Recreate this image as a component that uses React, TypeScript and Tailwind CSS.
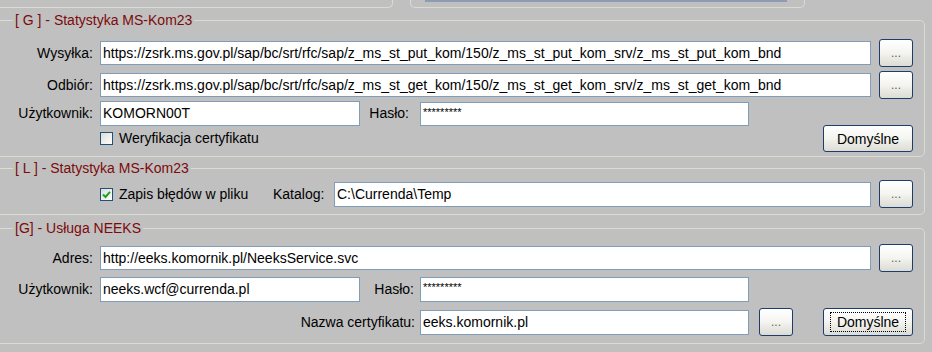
import React from 'react';

const frame = 'border border-[#dcdbd0] rounded-[5px]';

const TextBox: React.FC<{ value?: string; className?: string; password?: boolean }> = ({ value, className, password }) => (
  <div
    className={`flex bg-white border border-[#7f9db9] pl-[2px] whitespace-nowrap overflow-hidden ${password ? 'items-start pt-[1px] text-[11px]' : 'items-center text-[14px]'} ${className ?? ''}`}
  >
    {value}
  </div>
);

const Button: React.FC<{ label: string; className?: string; focused?: boolean; dim?: boolean }> = ({ label, className, focused, dim }) => (
  <div
    className={`flex items-center justify-center rounded-[3px] border border-[#1f3d6a] bg-gradient-to-b from-white via-[#f4f4f0] to-[#dcdcd4] ${className ?? ''}`}
  >
    <span
      className={`px-[3px] leading-[16px] ${dim ? 'text-[#606060] text-[12px]' : 'text-black text-[14px]'} ${focused ? 'outline outline-1 outline-dotted outline-black outline-offset-[1px] px-[5px]' : ''}`}
    >
      {label}
    </span>
  </div>
);

const CheckBox: React.FC<{ checked?: boolean }> = ({ checked }) => (
  <div className="w-[13px] h-[13px] border border-[#1c5180] bg-gradient-to-br from-[#dcdcd7] to-white flex items-center justify-center">
    {checked && (
      <svg width="9" height="9" viewBox="0 0 9 9">
        <path d="M1 4.5 L3.5 7 L8 1.8" fill="none" stroke="#21a121" strokeWidth="2" />
      </svg>
    )}
  </div>
);

const Legend: React.FC<{ title: string }> = ({ title }) => (
  <legend className="ml-[20px] px-[2px] text-[14px] leading-[16px] text-[#7d0a0a]">{title}</legend>
);

const Label: React.FC<{ text: string; className?: string }> = ({ text, className }) => (
  <div className={`text-right text-[14px] whitespace-nowrap ${className ?? ''}`}>{text}</div>
);

const PUT_URL = 'https://zsrk.ms.gov.pl/sap/bc/srt/rfc/sap/z_ms_st_put_kom/150/z_ms_st_put_kom_srv/z_ms_st_put_kom_bnd';
const GET_URL = 'https://zsrk.ms.gov.pl/sap/bc/srt/rfc/sap/z_ms_st_get_kom/150/z_ms_st_get_kom_srv/z_ms_st_get_kom_bnd';

export default function App() {
  return (
    <div
      className="w-[932px] h-[352px] overflow-hidden bg-[#c0c0c0] text-black"
      style={{ fontFamily: '"Liberation Sans", Arial, sans-serif' }}
    >
      {/* bottom edges of the panels above */}
      <div className="flex h-[8px]">
        <div className="-ml-[8px] w-[401px] h-[8px] border-b border-r border-[#dcdbd0] rounded-br-[5px]" />
        <div className="ml-[17px] w-[395px] h-[8px] border-b border-x border-[#dcdbd0] rounded-b-[5px]">
          <div className="ml-[14px] w-[362px] h-[2px] bg-[#8f9bb0]" />
        </div>
      </div>

      {/* [ G ] */}
      <fieldset className={`mt-[4px] -ml-[8px] w-[933px] ${frame} pb-[4px]`}>
        <Legend title="[ G ] - Statystyka MS-Kom23" />
        <div className="pl-[7px]">
          <div className="mt-[11px] flex items-center h-[28px]">
            <Label text="Wysyłka:" className="w-[93px]" />
            <TextBox className="ml-[7px] w-[771px] h-[24px]" value={PUT_URL} />
            <Button label="..." dim className="ml-[8px] w-[34px] h-[28px]" />
          </div>
          <div className="mt-[4px] flex items-center h-[28px]">
            <Label text="Odbiór:" className="w-[93px]" />
            <TextBox className="ml-[7px] w-[771px] h-[24px]" value={GET_URL} />
            <Button label="..." dim className="ml-[8px] w-[34px] h-[28px]" />
          </div>
          <div className="mt-[1px] flex items-center h-[27px]">
            <Label text="Użytkownik:" className="w-[93px]" />
            <TextBox className="ml-[7px] w-[260px] h-[25px]" value="KOMORN00T" />
            <Label text="Hasło:" className="w-[49px]" />
            <TextBox className="ml-[11px] w-[329px] h-[24px]" password value="*********" />
          </div>
          <div className="-mt-[2px] flex items-center h-[27px]">
            <div className="ml-[100px] flex items-center">
              <CheckBox />
              <span className="ml-[6px] text-[14px]">Weryfikacja certyfikatu</span>
            </div>
            <Button label="Domyślne" className="ml-auto mr-[11px] w-[90px] h-[27px]" />
          </div>
        </div>
      </fieldset>

      {/* [ L ] */}
      <fieldset className={`mt-[3px] -ml-[8px] w-[933px] ${frame} pb-[6px]`}>
        <Legend title="[ L ] - Statystyka MS-Kom23" />
        <div className="pl-[7px]">
          <div className="mt-[4px] flex items-center h-[28px]">
            <div className="ml-[100px] w-[173px] flex items-center">
              <CheckBox checked />
              <span className="ml-[6px] text-[14px]">Zapis błędów w pliku</span>
            </div>
            <div className="w-[61px] text-[14px]">Katalog:</div>
            <TextBox className="w-[537px] h-[25px]" value={'C:\\Currenda\\Temp'} />
            <Button label="..." dim className="ml-[8px] w-[34px] h-[28px]" />
          </div>
        </div>
      </fieldset>

      {/* [G] NEEKS */}
      <fieldset className={`mt-[5px] -ml-[8px] w-[933px] ${frame} pb-[7px]`}>
        <Legend title="[G] - Usługa NEEKS" />
        <div className="pl-[7px]">
          <div className="mt-[8px] flex items-center h-[28px]">
            <Label text="Adres:" className="w-[93px]" />
            <TextBox className="ml-[7px] w-[771px] h-[24px]" value="http://eeks.komornik.pl/NeeksService.svc" />
            <Button label="..." dim className="ml-[8px] w-[34px] h-[28px]" />
          </div>
          <div className="mt-[4px] flex items-center h-[26px]">
            <Label text="Użytkownik:" className="w-[93px]" />
            <TextBox className="ml-[7px] w-[260px] h-[25px]" value="neeks.wcf@currenda.pl" />
            <Label text="Hasło:" className="w-[54px]" />
            <TextBox className="ml-[6px] w-[329px] h-[25px]" password value="*********" />
          </div>
          <div className="mt-[6px] flex items-center h-[28px]">
            <Label text="Nazwa certyfikatu:" className="w-[415px]" />
            <TextBox className="ml-[5px] w-[329px] h-[25px]" value="eeks.komornik.pl" />
            <Button label="..." dim className="ml-[10px] w-[34px] h-[28px]" />
            <Button label="Domyślne" focused className="ml-[30px] w-[90px] h-[28px]" />
          </div>
        </div>
      </fieldset>
    </div>
  );
}
